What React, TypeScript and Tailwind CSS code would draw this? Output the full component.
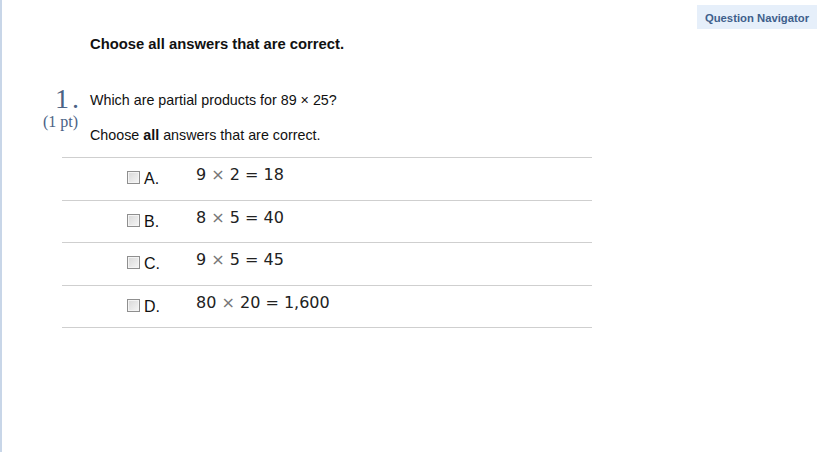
import React from "react";

const options = [
  { letter: "A.", math: ["9", "2", "18"] },
  { letter: "B.", math: ["8", "5", "40"] },
  { letter: "C.", math: ["9", "5", "45"] },
  { letter: "D.", math: ["80", "20", "1,600"] },
];

const Checkbox: React.FC = () => (
  <span className="block shrink-0 w-[13px] h-[13px] border border-[#8f8f8f] bg-gradient-to-br from-[#d8d8d8] to-[#f6f6f6] shadow-[inset_0_0_0_1px_#f4f4f4]" />
);

export default function App() {
  return (
    <div className="min-h-[452px] w-[819px] bg-white border-l-2 border-[#c8d6e8] font-['Liberation_Sans',Arial,sans-serif] text-[#111]">
      <div className="flex justify-end pt-[5px] pr-[2px]">
        <div className="w-[120px] h-[24px] bg-[#e6effa] flex items-center justify-center pt-[3px] text-[11.3px] font-bold text-[#3f5f8c]">
          Question Navigator
        </div>
      </div>

      <div className="pl-[88px] pt-[7px] text-[14.8px] font-bold leading-[16px]">
        Choose all answers that are correct.
      </div>

      <div className="flex mt-[34px]">
        <div className="w-[88px] flex flex-col items-end pr-[12px] font-['Liberation_Serif',serif] text-[#4b6285]">
          <span className="text-[28px] leading-[26px] tracking-[3px] -mr-[4px]">1.</span>
          <span className="text-[16px] leading-[18px] mt-[1px]">(1 pt)</span>
        </div>
        <div className="flex flex-col text-[14.3px] leading-[16px] pt-[6px]">
          <span>Which are partial products for 89 × 25?</span>
          <span className="mt-[19px]">
            Choose <b>all</b> answers that are correct.
          </span>
        </div>
      </div>

      <div className="ml-[60px] w-[530px] mt-[14px] border-t border-[#cfcfcf]">
        {options.map((o) => (
          <div key={o.letter} className="h-[42.5px] border-b border-[#cfcfcf] flex items-start pl-[65px] pt-[8px]">
            <div className="flex items-start w-[69px] pt-[5px]">
              <Checkbox />
              <span className="ml-[4px] text-[16px] leading-[16px]">{o.letter}</span>
            </div>
            <span className="font-['DejaVu_Sans',Verdana,sans-serif] text-[16px] leading-[18px] text-[#222] whitespace-pre">
              {o.math[0]} <span className="text-[#777]">×</span> {o.math[1]} = {o.math[2]}
            </span>
          </div>
        ))}
      </div>
    </div>
  );
}
